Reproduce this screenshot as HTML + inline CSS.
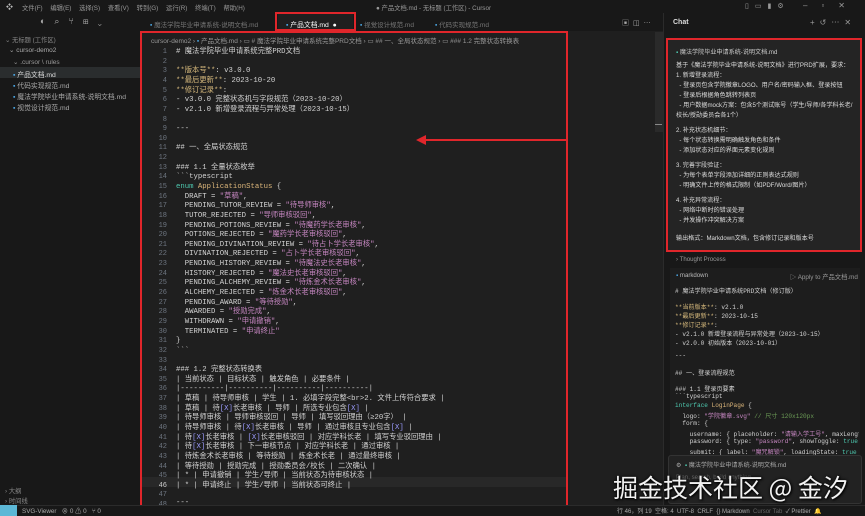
<!DOCTYPE html>
<html><head><meta charset="utf-8"><style>
*{margin:0;padding:0;box-sizing:border-box}
body{width:865px;height:516px;overflow:hidden;background:#1f1f1f;font-family:"Liberation Sans","Noto Sans CJK SC",sans-serif;color:#ccc;position:relative;font-size:7px}
.a{position:absolute;white-space:nowrap}
#code div{position:absolute;height:9px;line-height:9px}
.ln{left:145px;width:22px;text-align:right;color:#6e7681;font-family:"Liberation Mono",monospace;font-size:7px}
.cd{left:176px;color:#d4d4d4;white-space:pre;font-family:"Liberation Mono","Noto Sans CJK SC",monospace;font-size:7.3px}
.y{color:#d7ba7d}.s{color:#c586c0}.k{color:#4ec9b0}.o{color:#dcb67a}.b{color:#9c9cff}.g{color:#6a9955}
.red{position:absolute;border:2px solid #e0262b}
.cl{position:absolute;left:676px;color:#ddd;font-size:6.1px;white-space:nowrap}
.cc{position:absolute;left:675px;white-space:pre;font-family:"Liberation Mono","Noto Sans CJK SC",monospace;font-size:6.1px;color:#d4d4d4}
</style></head><body>
<div class="a" style="left:0;top:0;width:865px;height:13px;background:#181818"></div>
<div class="a" style="left:6px;top:2px;font-size:7px;color:#bbb">❖</div>
<div class="a" style="left:22px;top:3px;font-size:6.3px;color:#999;word-spacing:6px">文件(F) 编辑(E) 选择(S) 查看(V) 转到(G) 运行(R) 终端(T) 帮助(H)</div>
<div class="a" style="left:376px;top:3px;font-size:6.3px;color:#999">● 产品文档.md - 无标题 (工作区) - Cursor</div>
<div class="a" style="left:745px;top:2px;font-size:7px;color:#999;letter-spacing:6px">▯▭▮⚙</div>
<div class="a" style="left:803px;top:1px;font-size:8px;color:#999;letter-spacing:14px">–▫✕</div>
<div class="a" style="left:0;top:13px;width:140px;height:492px;background:#181818"></div>
<div class="a" style="left:40px;top:16px;font-size:9px;color:#aaa;letter-spacing:9px">◐⌕⑂⊞⌄</div>
<div class="a" style="left:5px;top:35px;font-size:6.3px;color:#888">⌄ 无标题 (工作区)</div>
<div class="a" style="left:9px;top:46px;font-size:6.5px;color:#aaa">⌄ cursor-demo2</div>
<div class="a" style="left:13px;top:58px;font-size:6.5px;color:#999">⌄ .cursor \ rules</div>
<div class="a" style="left:0;top:67px;width:140px;height:11px;background:#2a2d2e"></div>
<div class="a" style="left:13px;top:69px;font-size:6.8px;color:#ddd"><span style="color:#4aa3df">▪</span> 产品文档.md</div>
<div class="a" style="left:13px;top:80px;font-size:6.8px;color:#aaa"><span style="color:#4aa3df">▪</span> 代码实现规范.md</div>
<div class="a" style="left:13px;top:91px;font-size:6.8px;color:#aaa"><span style="color:#4aa3df">▪</span> 魔法学院毕业申请系统-说明文档.md</div>
<div class="a" style="left:13px;top:102px;font-size:6.8px;color:#aaa"><span style="color:#4aa3df">▪</span> 视觉设计规范.md</div>
<div class="a" style="left:5px;top:486px;font-size:6.3px;color:#888">› 大纲</div>
<div class="a" style="left:5px;top:496px;font-size:6.3px;color:#888">› 时间线</div>
<div class="a" style="left:140px;top:13px;width:525px;height:18px;background:#181818"></div>
<div class="a" style="left:150px;top:19px;font-size:6.5px;color:#777"><span style="color:#4aa3df">▪</span> 魔法学院毕业申请系统-说明文档.md</div>
<div class="a" style="left:278px;top:14px;width:75px;height:17px;background:#1f1f1f"></div>
<div class="a" style="left:286px;top:19px;font-size:6.8px;color:#fff"><span style="color:#4aa3df">▪</span> 产品文档.md &nbsp;●</div>
<div class="a" style="left:360px;top:19px;font-size:6.5px;color:#777"><span style="color:#4aa3df">▪</span> 视觉设计规范.md</div>
<div class="a" style="left:435px;top:19px;font-size:6.5px;color:#777"><span style="color:#4aa3df">▪</span> 代码实现规范.md</div>
<div class="a" style="left:622px;top:18px;font-size:7px;color:#aaa;letter-spacing:4px">▣◫⋯</div>
<div class="red" style="left:275px;top:12px;width:81px;height:19px"></div>
<div class="a" style="left:151px;top:35px;font-size:6.5px;color:#999">cursor-demo2 › <span style="color:#4aa3df">▪</span> 产品文档.md › ▭ # 魔法学院毕业申请系统完整PRD文档 › ▭ ## 一、全局状态规范 › ▭ ### 1.2 完整状态转换表</div>
<div class="a" style="left:142px;top:477px;width:424px;height:10px;background:#282828"></div>
<div id="code">
<div class="ln" style="top:48px">1</div><div class="cd" style="top:48px"># 魔法学院毕业申请系统完整PRD文档</div>
<div class="ln" style="top:57.6px">2</div>
<div class="ln" style="top:67.3px">3</div><div class="cd" style="top:67.3px"><span class="y">**版本号**</span>: v3.0.0</div>
<div class="ln" style="top:76.9px">4</div><div class="cd" style="top:76.9px"><span class="y">**最后更新**</span>: 2023-10-20</div>
<div class="ln" style="top:86.6px">5</div><div class="cd" style="top:86.6px"><span class="y">**修订记录**</span>:</div>
<div class="ln" style="top:96.2px">6</div><div class="cd" style="top:96.2px">- v3.0.0 完整状态机与字段规范（2023-10-20）</div>
<div class="ln" style="top:105.8px">7</div><div class="cd" style="top:105.8px">- v2.1.0 新增登录流程与异常处理（2023-10-15）</div>
<div class="ln" style="top:115.5px">8</div>
<div class="ln" style="top:125.1px">9</div><div class="cd" style="top:125.1px">---</div>
<div class="ln" style="top:134.8px">10</div>
<div class="ln" style="top:144.4px">11</div><div class="cd" style="top:144.4px">## 一、全局状态规范</div>
<div class="ln" style="top:154px">12</div>
<div class="ln" style="top:163.7px">13</div><div class="cd" style="top:163.7px">### 1.1 全量状态枚举</div>
<div class="ln" style="top:173.3px">14</div><div class="cd" style="top:173.3px">&#96;&#96;&#96;typescript</div>
<div class="ln" style="top:183px">15</div><div class="cd" style="top:183px"><span class="k">enum</span> <span class="o">ApplicationStatus</span> {</div>
<div class="ln" style="top:192.6px">16</div><div class="cd" style="top:192.6px">  DRAFT = <span class="s">"草稿"</span>,</div>
<div class="ln" style="top:202.2px">17</div><div class="cd" style="top:202.2px">  PENDING_TUTOR_REVIEW = <span class="s">"待导师审核"</span>,</div>
<div class="ln" style="top:211.9px">18</div><div class="cd" style="top:211.9px">  TUTOR_REJECTED = <span class="s">"导师审核驳回"</span>,</div>
<div class="ln" style="top:221.5px">19</div><div class="cd" style="top:221.5px">  PENDING_POTIONS_REVIEW = <span class="s">"待魔药学长老审核"</span>,</div>
<div class="ln" style="top:231.2px">20</div><div class="cd" style="top:231.2px">  POTIONS_REJECTED = <span class="s">"魔药学长老审核驳回"</span>,</div>
<div class="ln" style="top:240.8px">21</div><div class="cd" style="top:240.8px">  PENDING_DIVINATION_REVIEW = <span class="s">"待占卜学长老审核"</span>,</div>
<div class="ln" style="top:250.4px">22</div><div class="cd" style="top:250.4px">  DIVINATION_REJECTED = <span class="s">"占卜学长老审核驳回"</span>,</div>
<div class="ln" style="top:260.1px">23</div><div class="cd" style="top:260.1px">  PENDING_HISTORY_REVIEW = <span class="s">"待魔法史长老审核"</span>,</div>
<div class="ln" style="top:269.7px">24</div><div class="cd" style="top:269.7px">  HISTORY_REJECTED = <span class="s">"魔法史长老审核驳回"</span>,</div>
<div class="ln" style="top:279.4px">25</div><div class="cd" style="top:279.4px">  PENDING_ALCHEMY_REVIEW = <span class="s">"待炼金术长老审核"</span>,</div>
<div class="ln" style="top:289px">26</div><div class="cd" style="top:289px">  ALCHEMY_REJECTED = <span class="s">"炼金术长老审核驳回"</span>,</div>
<div class="ln" style="top:298.6px">27</div><div class="cd" style="top:298.6px">  PENDING_AWARD = <span class="s">"等待授勋"</span>,</div>
<div class="ln" style="top:308.3px">28</div><div class="cd" style="top:308.3px">  AWARDED = <span class="s">"授勋完成"</span>,</div>
<div class="ln" style="top:317.9px">29</div><div class="cd" style="top:317.9px">  WITHDRAWN = <span class="s">"申请撤销"</span>,</div>
<div class="ln" style="top:327.6px">30</div><div class="cd" style="top:327.6px">  TERMINATED = <span class="s">"申请终止"</span></div>
<div class="ln" style="top:337.2px">31</div><div class="cd" style="top:337.2px">}</div>
<div class="ln" style="top:346.8px">32</div><div class="cd" style="top:346.8px">&#96;&#96;&#96;</div>
<div class="ln" style="top:356.5px">33</div>
<div class="ln" style="top:366.1px">34</div><div class="cd" style="top:366.1px">### 1.2 完整状态转换表</div>
<div class="ln" style="top:375.8px">35</div><div class="cd" style="top:375.8px">| 当前状态 | 目标状态 | 触发角色 | 必要条件 |</div>
<div class="ln" style="top:385.4px">36</div><div class="cd" style="top:385.4px">|----------|----------|----------|----------|</div>
<div class="ln" style="top:395px">37</div><div class="cd" style="top:395px">| 草稿 | 待导师审核 | 学生 | 1. 必填字段完整&lt;br&gt;2. 文件上传符合要求 |</div>
<div class="ln" style="top:404.7px">38</div><div class="cd" style="top:404.7px">| 草稿 | 待<span class="b">[X]</span>长老审核 | 导师 | 所选专业包含<span class="b">[X]</span> |</div>
<div class="ln" style="top:414.3px">39</div><div class="cd" style="top:414.3px">| 待导师审核 | 导师审核驳回 | 导师 | 填写驳回理由（≥20字） |</div>
<div class="ln" style="top:424px">40</div><div class="cd" style="top:424px">| 待导师审核 | 待<span class="b">[X]</span>长老审核 | 导师 | 通过审核且专业包含<span class="b">[X]</span> |</div>
<div class="ln" style="top:433.6px">41</div><div class="cd" style="top:433.6px">| 待<span class="b">[X]</span>长老审核 | <span class="b">[X]</span>长老审核驳回 | 对应学科长老 | 填写专业驳回理由 |</div>
<div class="ln" style="top:443.2px">42</div><div class="cd" style="top:443.2px">| 待<span class="b">[X]</span>长老审核 | 下一审核节点 | 对应学科长老 | 通过审核 |</div>
<div class="ln" style="top:452.9px">43</div><div class="cd" style="top:452.9px">| 待炼金术长老审核 | 等待授勋 | 炼金术长老 | 通过最终审核 |</div>
<div class="ln" style="top:462.5px">44</div><div class="cd" style="top:462.5px">| 等待授勋 | 授勋完成 | 授勋委员会/校长 | 二次确认 |</div>
<div class="ln" style="top:472.2px">45</div><div class="cd" style="top:472.2px">| * | 申请撤销 | 学生/导师 | 当前状态为待审核状态 |</div>
<div class="ln" style="top:481.8px;color:#ccc">46</div><div class="cd" style="top:481.8px">| * | 申请终止 | 学生/导师 | 当前状态可终止 |</div>
<div class="ln" style="top:491.4px">47</div>
<div class="ln" style="top:501.1px">48</div><div class="cd" style="top:499px">---</div>
</div>
<div class="a" style="left:142px;top:506px;width:424px;height:3px;background:#1f1f1f"></div>
<div class="red" style="left:140px;top:31px;width:428px;height:477px"></div>
<div class="a" style="left:424px;top:139px;width:143px;height:2px;background:#e0262b"></div>
<div class="a" style="left:416px;top:135px;width:0;height:0;border-top:5px solid transparent;border-bottom:5px solid transparent;border-right:10px solid #e0262b"></div>
<div class="a" style="left:655px;top:32px;width:8px;height:100px;background:#2a2a2a"></div>
<div class="a" style="left:655px;top:124px;width:7px;height:1px;background:#888"></div>
<div class="a" style="left:663px;top:13px;width:202px;height:492px;background:#181818;border-left:1px solid #2b2b2b"></div>
<div class="a" style="left:673px;top:19px;font-size:7px;color:#ddd;font-weight:bold">Chat</div>
<div class="a" style="left:810px;top:17px;font-size:8px;color:#999;letter-spacing:5px">+↺⋯✕</div>
<div class="a" style="left:667px;top:39px;width:194px;height:212px;background:#242424"></div>
<div class="red" style="left:666px;top:38px;width:196px;height:214px"></div>
<div class="cl" style="top:47px;color:#ccc"><span style="color:#4ec9b0">▪</span> 魔法学院毕业申请系统-说明文档.md</div>
<div class="cl" style="top:60px">基于《魔法学院毕业申请系统-说明文档》进行PRD扩展，要求：</div>
<div class="cl" style="top:70px">1. 新增登录流程：</div>
<div class="cl" style="top:80px">&nbsp; - 登录页包含学院徽章LOGO、用户名/密码输入框、登录按钮</div>
<div class="cl" style="top:90px">&nbsp; - 登录后根据角色跳转列表页</div>
<div class="cl" style="top:100px">&nbsp; - 用户数据mock方案：包含5个测试账号（学生/导师/各学科长老/</div>
<div class="cl" style="top:110px">校长/授勋委员会各1个）</div>
<div class="cl" style="top:125px">2. 补充状态机细节：</div>
<div class="cl" style="top:135px">&nbsp; - 每个状态转换需明确触发角色和条件</div>
<div class="cl" style="top:145px">&nbsp; - 添加状态对应的界面元素变化规则</div>
<div class="cl" style="top:160px">3. 完善字段验证：</div>
<div class="cl" style="top:170px">&nbsp; - 为每个表单字段添加详细的正则表达式规则</div>
<div class="cl" style="top:180px">&nbsp; - 明确文件上传的格式限制（如PDF/Word/图片）</div>
<div class="cl" style="top:195px">4. 补充异常流程：</div>
<div class="cl" style="top:205px">&nbsp; - 网络中断时的错误处理</div>
<div class="cl" style="top:215px">&nbsp; - 并发操作冲突解决方案</div>
<div class="cl" style="top:233px">输出格式：Markdown文档，包含修订记录和版本号</div>
<div class="cl" style="top:256px;color:#999">› Thought Process</div>
<div class="a" style="left:670px;top:268px;width:190px;height:190px;background:#1d1d1d"></div>
<div class="cl" style="top:272px;color:#bbb"><span style="color:#4aa3df">▪</span> markdown</div>
<div class="a" style="left:790px;top:272px;font-size:6.3px;color:#999">▷ Apply to 产品文档.md</div>
<div class="a" style="left:0;top:0;width:859px;height:516px;overflow:hidden">
<div class="cc" style="top:286px"># 魔法学院毕业申请系统PRD文档（修订版）</div>
<div class="cc" style="top:302px"><span class="y">**当前版本**</span>: v2.1.0</div>
<div class="cc" style="top:311px"><span class="y">**最后更新**</span>: 2023-10-15</div>
<div class="cc" style="top:320px"><span class="y">**修订记录**</span>:</div>
<div class="cc" style="top:329px">- v2.1.0 新增登录流程与异常处理（2023-10-15）</div>
<div class="cc" style="top:338px">- v2.0.0 初始版本（2023-10-01）</div>
<div class="cc" style="top:352px">---</div>
<div class="cc" style="top:368px">## 一、登录流程规范</div>
<div class="cc" style="top:384px">### 1.1 登录页要素</div>
<div class="cc" style="top:393px">&#96;&#96;&#96;typescript</div>
<div class="cc" style="top:402px"><span class="k">interface</span> <span class="o">LoginPage</span> {</div>
<div class="cc" style="top:411px">  logo: <span class="s">"学院徽章.svg"</span> <span class="g">// 尺寸 120x120px</span></div>
<div class="cc" style="top:420px">  form: {</div>
<div class="cc" style="top:429px">    username: { placeholder: <span class="s">"请输入学工号"</span>, maxLength</div>
<div class="cc" style="top:438px">    password: { type: <span class="s">"password"</span>, showToggle: <span class="k">true</span> }</div>
<div class="cc" style="top:447px">    submit: { label: <span class="s">"魔咒解锁"</span>, loadingState: <span class="k">true</span> }</div>
</div>
<div class="a" style="left:668px;top:455px;width:194px;height:49px;background:#222;border:1px solid #333;border-radius:3px"></div>
<div class="cl" style="top:460px;color:#aaa">⚙ &nbsp;<span style="color:#4ec9b0">▪</span> 魔法学院毕业申请系统-说明文档.md</div>
<div class="cl" style="top:474px;color:#666">Plan, search, build anything</div>
<div class="a" style="left:613px;top:470px;font-size:25px;color:#f2f2f2;font-family:'Noto Sans CJK SC',sans-serif;line-height:34px;text-shadow:0 0 3px #000,1px 1px 2px #000">掘金技术社区 @ 金汐</div>
<div class="a" style="left:0;top:505px;width:865px;height:11px;background:#181818;border-top:1px solid #2b2b2b"></div>
<div class="a" style="left:0;top:505px;width:17px;height:11px;background:#5cb8d6"></div>
<div class="a" style="left:22px;top:506px;font-size:6.3px;color:#aaa">SVG-Viewer &nbsp; ⊗ 0 ⚠ 0 &nbsp; ⑂ 0</div>
<div class="a" style="left:617px;top:506px;font-size:6px;color:#aaa">行 46，列 19 &nbsp;空格: 4 &nbsp;UTF-8 &nbsp;CRLF &nbsp;{} Markdown &nbsp;<span style="color:#666">Cursor Tab</span> &nbsp;✓ Prettier &nbsp;🔔</div>
</body></html>
